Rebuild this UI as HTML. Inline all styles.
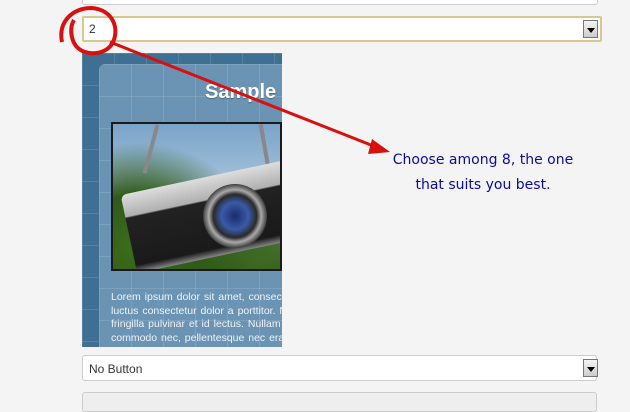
<!DOCTYPE html>
<html><head><meta charset="utf-8"><style>
*{margin:0;padding:0;box-sizing:border-box}
body{width:630px;height:400px;background:#f4f4f4;position:relative;overflow:hidden;font-family:"Liberation Sans",Arial,sans-serif}
.box{position:absolute;background:#fff;border:1px solid #ccc;border-radius:3px}
.btn{position:absolute;width:15px;height:18px;border:1px solid #777;background:linear-gradient(#f4f4f4,#ccc)}
.btn:after{content:"";position:absolute;left:3px;top:7px;border-left:4px solid transparent;border-right:4px solid transparent;border-top:5px solid #000}
.prev{position:absolute;left:82px;top:53px;width:200px;height:294px;background:#3f6f93;overflow:hidden;
background-image:linear-gradient(90deg,rgba(255,255,255,.12) 1px,transparent 1px),linear-gradient(rgba(255,255,255,.12) 1px,transparent 1px);background-size:32px 32px}
.inner{position:absolute;left:17px;top:11px;width:200px;height:300px;background:#6b94b4;border-radius:6px;
background-image:linear-gradient(90deg,rgba(255,255,255,.12) 1px,transparent 1px),linear-gradient(rgba(255,255,255,.12) 1px,transparent 1px);background-size:32px 32px}
.photo{position:absolute;left:29px;top:69px;width:171px;height:149px;overflow:hidden;
background:radial-gradient(ellipse at 15% 85%,#3d6e1c 0,#2f5a18 30%,transparent 60%),radial-gradient(ellipse at 85% 90%,#3c6a22,transparent 45%),linear-gradient(#7aa4c8,#a8c4dc 45%,#6f9250 75%,#2f5418);border:2px solid #1a1a1a}
.cam{position:absolute;left:14px;top:52px;width:175px;height:80px;background:linear-gradient(#ddd 0,#b0b0b0 28%,#222 30%,#1a1a1a 90%,#888);border-radius:6px;transform:rotate(-12deg)}
.lens{position:absolute;left:90px;top:60px;width:64px;height:64px;border-radius:50%;background:radial-gradient(circle,#1a2a6a 0,#3a5aa8 30%,#2a2a2a 48%,#aaa 58%,#333 72%,#bbb 80%,#555 100%)}
.strap{position:absolute;width:4px;height:50px;background:#888;top:0}
.txt{position:absolute;left:29px;top:238px;color:#eef3f8;font-size:10.5px;line-height:13.6px;white-space:nowrap;word-spacing:1px}
.title{position:absolute;left:106px;top:17px;color:#fff;font-weight:bold;font-size:20px;white-space:nowrap;text-shadow:0 1px 1px rgba(0,0,0,.3)}
.note{position:absolute;left:378px;top:148px;width:210px;text-align:center;color:#0a0aa8;font-family:"Comic Sans MS","DejaVu Sans",cursive;font-size:14px;line-height:25px}
</style></head><body>
<div class="box" style="left:82px;top:-5px;width:516px;height:10px"></div>
<div class="box" style="left:82px;top:16px;width:520px;height:26px;border:2px solid #dcc690;border-radius:2px"></div>
<div style="position:absolute;left:89px;top:22px;font-size:12px;color:#333">2</div>
<div class="btn" style="left:583px;top:20px"></div>
<div class="prev"><div class="inner"><div class="title">Sample B</div></div>
<div class="photo"><div class="strap" style="left:36px;transform:rotate(15deg)"></div><div class="strap" style="left:150px;transform:rotate(-10deg)"></div><div class="cam"></div><div class="lens"></div></div>
<div class="txt">Lorem ipsum dolor sit amet, consectetur<br>luctus consectetur dolor a porttitor. Nam<br>fringilla pulvinar et id lectus. Nullam et<br>commodo nec, pellentesque nec erat ut</div></div>
<div class="box" style="left:82px;top:355px;width:515px;height:26px"></div>
<div style="position:absolute;left:89px;top:362px;font-size:12px;color:#333">No Button</div>
<div class="btn" style="left:583px;top:359px"></div>
<div class="box" style="left:82px;top:392px;width:515px;height:20px;background:#eee"></div>
<svg style="position:absolute;left:0;top:0" width="630" height="400">
<path d="M62,42 C58,22 72,8 92,8 C114,10 120,30 112,44 C104,56 84,56 76,46 C70,38 70,26 74,20" fill="none" stroke="#d81010" stroke-width="4"/>
<line x1="110" y1="42" x2="376" y2="147" stroke="#d81010" stroke-width="3"/>
<polygon points="390,152 372,139 368,154" fill="#d81010"/>
</svg>
<div class="note">Choose among 8, the one<br>that suits you best.</div>
</body></html>
